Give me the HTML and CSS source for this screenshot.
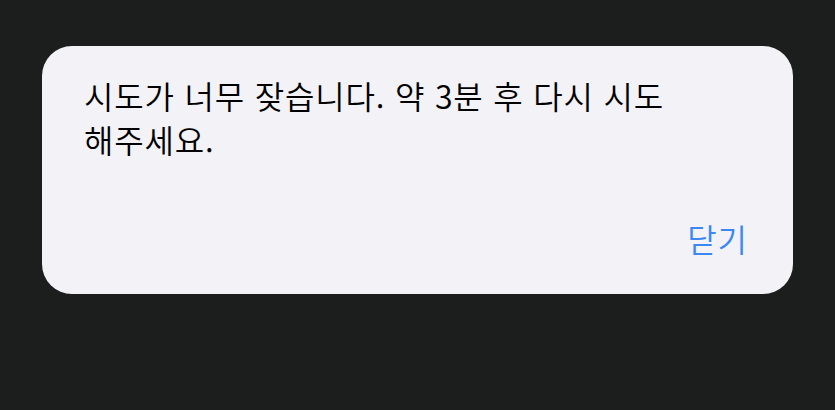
FILE: index.html
```html
<!DOCTYPE html>
<html lang="ko">
<head>
<meta charset="utf-8">
<link rel="stylesheet" href="styles.css">
</head>
<body>
<div class="page">
  <div class="dialog">
    <p class="message">시도가 너무 잦습니다. 약 3분 후 다시 시도<br>해주세요.</p>
    <div class="actions">
      <span class="button">닫기</span>
    </div>
  </div>
</div>
</body>
</html>
```
FILE: styles.css
```css
html, body {
  margin: 0;
  padding: 0;
  background: #1c1d1d;
}
body {
  width: 835px;
  height: 410px;
  font-family: "Noto Sans CJK KR", "Noto Sans", sans-serif;
}
.page {
  padding: 46px 0 0 42px;
}
.dialog {
  box-sizing: border-box;
  width: 751px;
  height: 248px;
  border-radius: 30px;
  background: #f2f2f7;
  display: flex;
  flex-direction: column;
  padding: 27px 46px 34px 42px;
}
.message {
  margin: 0;
  font-size: 32px;
  font-weight: 350;
  line-height: 44px;
  letter-spacing: 0.8px;
  color: #000;
}
.actions {
  margin-top: auto;
  display: flex;
  justify-content: flex-end;
}
.button {
  font-size: 32px;
  font-weight: 350;
  line-height: 43px;
  letter-spacing: 0.8px;
  margin-right: -0.8px;
  color: #3a87f5;
}
```
